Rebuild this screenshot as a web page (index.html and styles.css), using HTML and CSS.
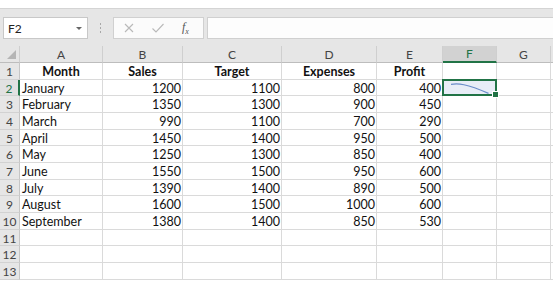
FILE: index.html
```html
<!DOCTYPE html>
<html lang="en">
<head>
  <meta charset="UTF-8">
  <title>Sheet1 - Excel</title>
  <link rel="stylesheet" href="styles.css">
</head>
<body>
  <div class="top-strip"></div>

  <!-- formula bar -->
  <div class="toolbar">
    <div class="name-box">
      <span>F2</span>
      <span class="caret"></span>
    </div>
    <div class="grip">
      <span></span><span></span><span></span>
    </div>
    <div class="fx-box">
      <svg class="fx-icon" width="12" height="12" viewBox="0 0 12 12">
        <path d="M2 2 L10 10 M10 2 L2 10" stroke="#b9b9b9" stroke-width="1.1" fill="none"/>
      </svg>
      <svg class="fx-icon" width="14" height="12" viewBox="0 0 14 12">
        <path d="M1.5 6.5 L5 10 L12.5 2" stroke="#b9b9b9" stroke-width="1.1" fill="none"/>
      </svg>
      <span class="fx-label"><i>f</i><sub>x</sub></span>
    </div>
    <div class="formula-input"></div>
  </div>

  <div class="sheet" id="sheet"></div>

  <script>
    const cols = ['A', 'B', 'C', 'D', 'E', 'F', 'G', ''];
    const rows = [
      ['Month', 'Sales', 'Target', 'Expenses', 'Profit'],
      ['January', 1200, 1100, 800, 400],
      ['February', 1350, 1300, 900, 450],
      ['March', 990, 1100, 700, 290],
      ['April', 1450, 1400, 950, 500],
      ['May', 1250, 1300, 850, 400],
      ['June', 1550, 1500, 950, 600],
      ['July', 1390, 1400, 890, 500],
      ['August', 1600, 1500, 1000, 600],
      ['September', 1380, 1400, 850, 530],
      [], [], []
    ];

    const sheet = document.getElementById('sheet');

    function cell(cls, text) {
      const d = document.createElement('div');
      d.className = cls;
      if (text !== undefined) d.textContent = text;
      sheet.appendChild(d);
      return d;
    }

    // header row
    const corner = cell('corner');
    corner.innerHTML = '<span class="tri"></span>';
    cols.forEach(c => {
      cell('col-head' + (c === 'F' ? ' active' : ''), c);
    });

    rows.forEach((r, i) => {
      cell('row-head' + (i === 1 ? ' active' : ''), i + 1);
      for (let j = 0; j < cols.length; j++) {
        const v = r[j];
        let cls = 'cell';
        if (i === 0) cls += ' bold';
        else if (typeof v === 'number') cls += ' num';
        const c = cell(cls, v === undefined ? '' : v);
        if (i === 1 && j === 5) {
          c.classList.add('selected');
          c.innerHTML = `
            <svg class="spark" width="54" height="17" viewBox="0 0 54 17">
              <path d="M8 4.4 C15 3.2, 23 3.6, 45.5 13.4" stroke="#6a8cc9" stroke-width="1.2" fill="none"/>
            </svg>
            <span class="handle"></span>`;
        }
      }
    });
  </script>
</body>
</html>
```

FILE: styles.css
```css
body {
  margin: 0;
  padding: 0;
  background: #fff;
  font-family: Lato, "Liberation Sans", sans-serif;
  overflow: hidden;
}

.top-strip {
  height: 8px;
  background: #fff;
}

.toolbar {
  display: flex;
  align-items: flex-start;
  height: 38px;
  padding: 8px 0 0 3px;
  box-sizing: border-box;
  background: #e6e6e6;
  border-top: 1px solid #d4d4d4;
}

.name-box {
  width: 85px;
  height: 22px;
  box-sizing: border-box;
  background: #fff;
  border: 1px solid #c8c8c8;
  display: flex;
  align-items: center;
  justify-content: space-between;
  padding: 0 5px 0 4px;
  font-size: 12px;
  color: #222;
}

.caret {
  width: 0;
  height: 0;
  border-left: 3px solid transparent;
  border-right: 3px solid transparent;
  border-top: 3px solid #666;
}

.grip {
  width: 25px;
  height: 22px;
  display: flex;
  flex-direction: column;
  align-items: center;
  justify-content: center;
  gap: 2px;
}

.grip span {
  width: 1px;
  height: 2px;
  background: #a8a8a8;
}

.fx-box {
  width: 91px;
  height: 22px;
  box-sizing: border-box;
  background: #fbfbfb;
  border: 1px solid #d0d0d0;
  display: flex;
  align-items: center;
  padding-left: 9px;
  gap: 16px;
}

.fx-label {
  font-family: "Liberation Serif", serif;
  font-size: 12px;
  color: #555;
  margin-left: 1px;
}

.fx-label sub {
  font-size: 8px;
  font-style: italic;
}

.formula-input {
  flex: 1;
  height: 22px;
  margin-left: 3px;
  box-sizing: border-box;
  background: #fdfdfd;
  border: 1px solid #d0d0d0;
  border-right: none;
}

/* grid */
.sheet {
  display: grid;
  grid-template-columns: 20px 83px 80px 99px 95px 66px 54px 54px 1fr;
  grid-template-rows: 17px repeat(13, 16.67px);
  font-size: 12.5px;
  color: #111;
}

.corner {
  position: relative;
  background: #e6e6e6;
  border-right: 1px solid #cfcfcf;
  border-bottom: 1px solid #bdbdbd;
}

.corner .tri {
  position: absolute;
  right: 3px;
  bottom: 3px;
  width: 0;
  height: 0;
  border-left: 9px solid transparent;
  border-bottom: 9px solid #b5b5b5;
}

.col-head {
  background: #e6e6e6;
  border-right: 1px solid #cfcfcf;
  border-bottom: 1px solid #bdbdbd;
  text-align: center;
  font-size: 12px;
  line-height: 17px;
  color: #444;
}

.col-head.active {
  background: #d2d2d2;
  color: #217346;
  border-bottom: 2px solid #217346;
  line-height: 16px;
}

.row-head {
  background: #e6e6e6;
  border-right: 1px solid #c6c6c6;
  border-bottom: 1px solid #d2d2d2;
  text-align: center;
  font-size: 12px;
  line-height: 17px;
  color: #444;
}

.row-head.active {
  color: #217346;
  border-right: 2px solid #217346;
  background: #e1e1e1;
}

.cell {
  border-right: 1px solid #dadada;
  border-bottom: 1px solid #dadada;
  padding: 0 2px;
  line-height: 18px;
  white-space: nowrap;
  overflow: hidden;
}

.cell.bold {
  font-weight: bold;
  text-align: center;
}

.cell.num {
  text-align: right;
  padding-right: 1px;
}

.cell.selected {
  position: relative;
  overflow: visible;
  padding: 0;
  background: #e8edf7;
}

.cell.selected::after {
  content: "";
  position: absolute;
  left: -1px;
  top: -1px;
  right: -1px;
  bottom: -1px;
  border: 2px solid #217346;
}

.spark {
  display: block;
}

.handle {
  position: absolute;
  right: -3px;
  bottom: -3px;
  width: 5px;
  height: 5px;
  background: #217346;
  border: 1px solid #fff;
  z-index: 2;
}
```
